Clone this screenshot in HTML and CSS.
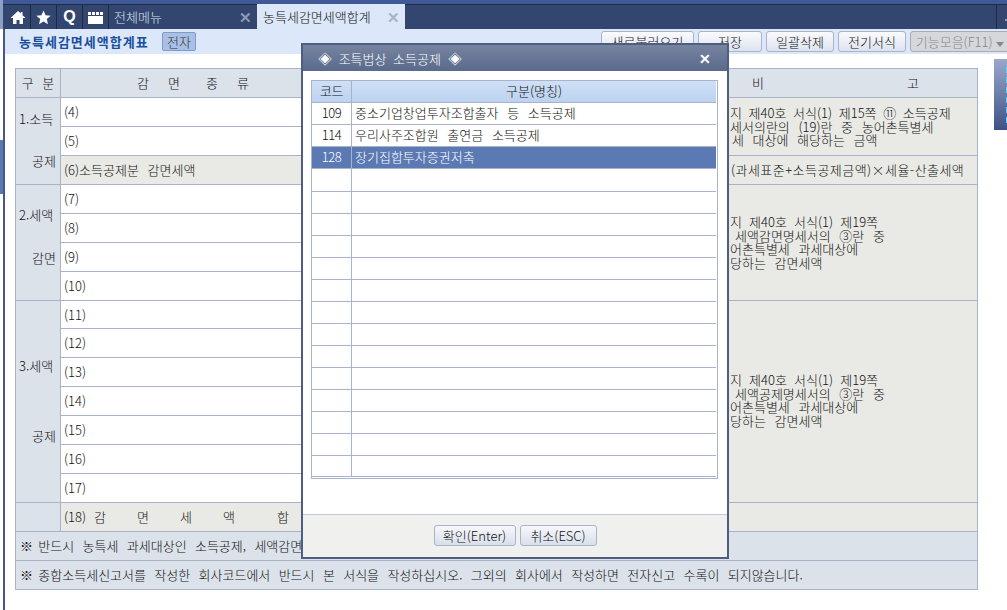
FILE: index.html
```html
<!DOCTYPE html>
<html lang="ko">
<head>
<meta charset="utf-8">
<title>농특세감면세액합계표</title>
<link rel="stylesheet" href="styles.css">
</head>
<body>
<div class="topline"></div>
<div class="tabbar">
  <div class="ico"><svg width="16" height="15" viewBox="0 0 16 15"><path d="M8 1 L0.5 8 H3 V14 H6.5 V10 H9.5 V14 H13 V8 H15.5 L12.5 5.2 V2 H10.8 V3.6 Z" fill="#fff"/></svg></div>
  <div class="ico"><svg width="15" height="15" viewBox="0 0 15 15"><path d="M7.5 .5 L9.6 5.3 14.7 5.7 10.8 9.1 12 14.2 7.5 11.5 3 14.2 4.2 9.1 .3 5.7 5.4 5.3Z" fill="#fff"/></svg></div>
  <div class="ico q">Q</div>
  <div class="ico"><svg width="15" height="13" viewBox="0 0 15 13"><path d="M0 1H3V4H0ZM4 1H7V4H4ZM8 1H11V4H8ZM12 1H15V4H12ZM0 5H15V13H0Z" fill="#fff"/></svg></div>
  <div class="tab tab-menu"><span>전체메뉴</span><i class="x">✕</i></div>
  <div class="tab tab-active"><span>농특세감면세액합계</span><i class="x">✕</i></div>
  <div class="grip"></div>
</div>
<div class="toolbar">
  <div class="page-title">농특세감면세액합계표</div>
  <div class="chip">전자</div>
  <div class="actions">
    <div class="btn b1">새로불러오기</div>
    <div class="btn b2">저장</div>
    <div class="btn b3">일괄삭제</div>
    <div class="btn b4">전기서식</div>
    <div class="btn b5">기능모음(F11) <i class="caret"></i></div>
  </div>
</div>
<div class="corner"></div>
<div class="sidebar-edge"></div>
<div class="side-block"></div>
<div class="side-tab"></div>
<main class="content">
  <div class="sheet">
    <div class="c hd a">구 분</div>
    <div class="c hd b"><span class="spread w1"><span>감</span><span>면</span><span>종</span><span>류</span></span></div>
    <div class="c hd r"><span class="spread w2"><span>비</span><span>고</span></span></div>

    <div class="c sec s1"><span>1.소득</span><span class="ind">공제</span></div>
    <div class="c ln">(4)</div>
    <div class="c note n1"><p>지 제40호 서식(1) 제15쪽 ⑪ 소득공제</p><p>세서의란의 (19)란 중 농어촌특별세</p><p class="in1">세 대상에 해당하는 금액</p></div>
    <div class="c ln">(5)</div>
    <div class="c ln g">(6)소득공제분 감면세액</div>
    <div class="c note g calc">(과세표준+소득공제금액)×세율-산출세액</div>

    <div class="c sec s2"><span>2.세액</span><span class="ind">감면</span></div>
    <div class="c ln">(7)</div>
    <div class="c note n2"><p>지 제40호 서식(1) 제19쪽</p><p class="in2">세액감면명세서의 ③란 중</p><p>어촌특별세 과세대상에</p><p>당하는 감면세액</p></div>
    <div class="c ln">(8)</div>
    <div class="c ln">(9)</div>
    <div class="c ln">(10)</div>

    <div class="c sec s3"><span>3.세액</span><span class="ind">공제</span></div>
    <div class="c ln">(11)</div>
    <div class="c note n3"><p>지 제40호 서식(1) 제19쪽</p><p class="in2">세액공제명세서의 ③란 중</p><p>어촌특별세 과세대상에</p><p>당하는 감면세액</p></div>
    <div class="c ln">(12)</div>
    <div class="c ln">(13)</div>
    <div class="c ln">(14)</div>
    <div class="c ln">(15)</div>
    <div class="c ln">(16)</div>
    <div class="c ln">(17)</div>

    <div class="c sec"></div>
    <div class="c ln g"><span class="total"><span>(18)</span><span>감</span><span>면</span><span>세</span><span>액</span><span>합</span></span></div>
    <div class="c note g"></div>

    <div class="c foot"><span class="mark">※</span> 반드시 농특세 과세대상인 소득공제, 세액감면</div>
    <div class="c foot"><span class="mark">※</span> 종합소득세신고서를 작성한 회사코드에서 반드시 본 서식을 작성하십시오. 그외의 회사에서 작성하면 전자신고 수록이 되지않습니다.</div>
  </div>
</main>

<section class="dialog">
  <header class="dlg-title"><span class="dlg-text"><b>◈</b> 조특법상 소득공제 <b>◈</b></span><i class="dlg-x">✕</i></header>
  <div class="dlg-body">
    <div class="list">
      <div class="row head"><div class="code">코드</div><div class="name ctr">구분(명칭)</div></div>
      <div class="row"><div class="code">109</div><div class="name">중소기업창업투자조합출자 등 소득공제</div></div>
      <div class="row"><div class="code">114</div><div class="name">우리사주조합원 출연금 소득공제</div></div>
      <div class="row sel"><div class="code">128</div><div class="name">장기집합투자증권저축</div></div>
      <div class="row tall"><div class="code"></div><div class="name"></div></div>
      <div class="row"><div class="code"></div><div class="name"></div></div>
      <div class="row"><div class="code"></div><div class="name"></div></div>
      <div class="row"><div class="code"></div><div class="name"></div></div>
      <div class="row"><div class="code"></div><div class="name"></div></div>
      <div class="row"><div class="code"></div><div class="name"></div></div>
      <div class="row"><div class="code"></div><div class="name"></div></div>
      <div class="row"><div class="code"></div><div class="name"></div></div>
      <div class="row"><div class="code"></div><div class="name"></div></div>
      <div class="row"><div class="code"></div><div class="name"></div></div>
      <div class="row"><div class="code"></div><div class="name"></div></div>
      <div class="row"><div class="code"></div><div class="name"></div></div>
      <div class="row"><div class="code"></div><div class="name"></div></div>
      <div class="row last"><div class="code"></div><div class="name"></div></div>
    </div>
  </div>
  <footer class="dlg-foot">
    <div class="dbtn ok">확인(Enter)</div>
    <div class="dbtn esc">취소(ESC)</div>
  </footer>
</section>
</body>
</html>
```
FILE: styles.css
```css
* { box-sizing: border-box; }
html, body { margin: 0; padding: 0; width: 1007px; height: 610px; overflow: hidden; background: #fff; }
body { font: 300 13px/14px "Noto Sans CJK KR", "Noto Sans", sans-serif; color: #111; word-spacing: 5px; position: relative; }
p { margin: 0; }
i { font-style: normal; }
.topline { height: 4px; background: #3f5a96; }
.tabbar { height: 25px; background: #32466f; border-top: 1px solid #1f2c4a; display: flex; align-items: stretch; padding-left: 5px; }
.ico { width: 26px; display: flex; align-items: center; justify-content: center; border-right: 1px solid #1d2a47; color: #fff; }
.q { font: bold 16px "Liberation Sans", sans-serif; }
.tab { display: flex; align-items: center; justify-content: space-between; padding-left: 5px; padding-right: 5px; }
.tab-menu { width: 148px; color: #dbe3f2; }
.tab-active { width: 148px; background: #dce8f9; color: #111; margin-top: -1px; padding-left: 6px; }
.x { font-size: 15px; color: #8e9ab3; font-weight: 700; }
.tab-active .x { color: #a9b4c8; }
.grip { margin-left: auto; width: 11px; border-left: 1px solid #1d2a47; position: relative; }
.grip::after { content: ""; position: absolute; left: 8px; top: 14px; width: 2px; height: 2px; background: #8e9ab3; }
.toolbar { height: 25px; margin-left: 5px; background: #dce8f9; display: flex; align-items: center; padding-left: 14px; }
.page-title { color: #1a4fa0; font-weight: 700; width: 143px; white-space: nowrap; word-spacing: 0; letter-spacing: 1px; }
.chip { width: 34px; height: 19px; background: #a9c0e4; border: 1px solid #7d9bcb; border-radius: 2px; text-align: center; line-height: 17px; color: #333; }
.actions { margin-left: auto; display: flex; gap: 4px; align-self: flex-start; margin-top: 2px; margin-right: -3px; }
.btn { height: 21px; border: 1px solid #a8b4cc; border-radius: 3px; background: linear-gradient(#fafbfd, #dde3ef); text-align: center; line-height: 19px; white-space: nowrap; }
.b1 { width: 93px; } .b2 { width: 64px; } .b3 { width: 68px; } .b4 { width: 68px; }
.b5 { width: 100px; background: #d5d7db; color: #888; border-color: #a9abb0; word-spacing: 0; }
.caret { display: inline-block; border: 4px solid transparent; border-top: 5px solid #888; border-bottom: 0; }
.corner { position: absolute; left: 0; top: 0; width: 3px; height: 29px; background: #8c9fc6; }
.sidebar-edge { position: absolute; left: 3px; top: 29px; width: 2px; height: 581px; background: #46588a; }
.side-block { position: absolute; left: 0; top: 140px; width: 3px; height: 54px; background: #5a78b0; }
.side-tab { position: absolute; left: 994px; top: 59px; width: 13px; height: 71px; background: linear-gradient(#9aa8cc, #3d5285); }
.side-tab::after { content: ""; position: absolute; right: 0; top: 8px; width: 1px; height: 60px; background: repeating-linear-gradient(#5fd0ff 0 6px, transparent 6px 10px); }
.content { padding: 14px 30px 0 15px; }
.sheet { width: 963px; display: grid; grid-template-columns: 45px 666px 251px; grid-template-rows: repeat(8, 29px) 28px repeat(9, 29px); border-left: 1px solid #a8b2c8; border-top: 1px solid #a8b2c8; }
.c { border-right: 1px solid #a8b2c8; border-bottom: 1px solid #a8b2c8; padding-left: 3px; display: flex; align-items: center; white-space: nowrap; overflow: hidden; }
.hd { background: #dbe2ea; justify-content: center; padding: 0; }
.hd.b { justify-content: flex-start; }
.spread { display: flex; justify-content: space-between; }
.w1 { width: 112px; margin-left: 76px; }
.w1 span:nth-child(3) { margin-left: 7px; }
.w2 { width: 167px; margin-left: 25px; }
.r { justify-content: flex-start; }
.sec { background: #dbe2ea; flex-direction: column; align-items: flex-start; justify-content: flex-start; padding-left: 3px; }
.ind { margin-left: 13px; }
.s1 { grid-row: span 3; padding-top: 14px; gap: 28px; }
.s2 { grid-row: span 4; padding-top: 23px; gap: 29px; }
.s3 { grid-row: span 7; padding-top: 58px; gap: 56px; }
.ln { background: #fff; }
.g { background: #e9eae5; }
.note { background: #e9eae5; padding-left: 3px; display: block; line-height: 13.5px; }
.note.g { display: flex; align-items: center; }
.note p:first-child { word-spacing: 3.5px; }
.n1 p:first-child { word-spacing: 3px; }
.calc { letter-spacing: .45px; padding-left: 4px; }
.in1 { padding-left: 2px; }
.in2 { padding-left: 5px; }
.n1 { grid-row: span 2; padding-top: 8px; }
.n2 { grid-row: span 4; padding-top: 30px; }
.n3 { grid-row: span 7; padding-top: 72px; }
.total { display: flex; }
.total span { width: 43px; }
.total span:first-child { width: 30px; }
.total span:nth-child(5) { width: 54px; }
.foot { grid-column: 1 / -1; background: #dbe2ea; padding-left: 4px; word-spacing: 4.7px; white-space: pre; }
.mark { margin-right: -3px; }
.dialog { position: absolute; left: 301px; top: 43px; width: 428px; height: 516px; border: 2px solid #4e5d80; background: #fff; display: flex; flex-direction: column; }
.dlg-title { height: 26px; background: linear-gradient(#76849f, #5a6a8c); color: #fff; display: flex; justify-content: space-between; align-items: center; padding: 0 16px 0 15px; flex: none; word-spacing: 3px; }
.dlg-text b { font-weight: 400; font-size: 14px; }
.dlg-x { font-size: 14px; font-weight: 700; }
.dlg-body { flex: 1; padding: 9px 8px; }
.list { width: 407px; border: 1px solid #a8b2c8; padding: 0 1px 1px 0; }
.row { display: flex; height: 22px; border-bottom: 1px solid #a8b2c8; line-height: 20px; }
.row.tall { height: 23px; }
.row.last { height: 21px; }
.code { width: 40px; border-right: 1px solid #a8b2c8; text-align: center; letter-spacing: -.4px; }
.name { flex: 1; padding-left: 3px; white-space: nowrap; }
.ctr { text-align: center; padding: 0; }
.head { background: linear-gradient(#cfe0f6, #bcd2f0); }
.sel { background: #5b79b3; color: #fff; }
.dlg-foot { height: 43px; flex: none; background: #f0f0ee; border-top: 1px solid #c4c8d2; display: flex; justify-content: center; gap: 4px; padding-top: 10px; }
.dbtn { height: 21px; border: 1px solid #a8b4d0; border-radius: 3px; background: linear-gradient(#f6f8fb, #d9dfeb); line-height: 19px; word-spacing: 0; text-align: center; }
.ok { width: 82px; }
.esc { width: 77px; }
```
